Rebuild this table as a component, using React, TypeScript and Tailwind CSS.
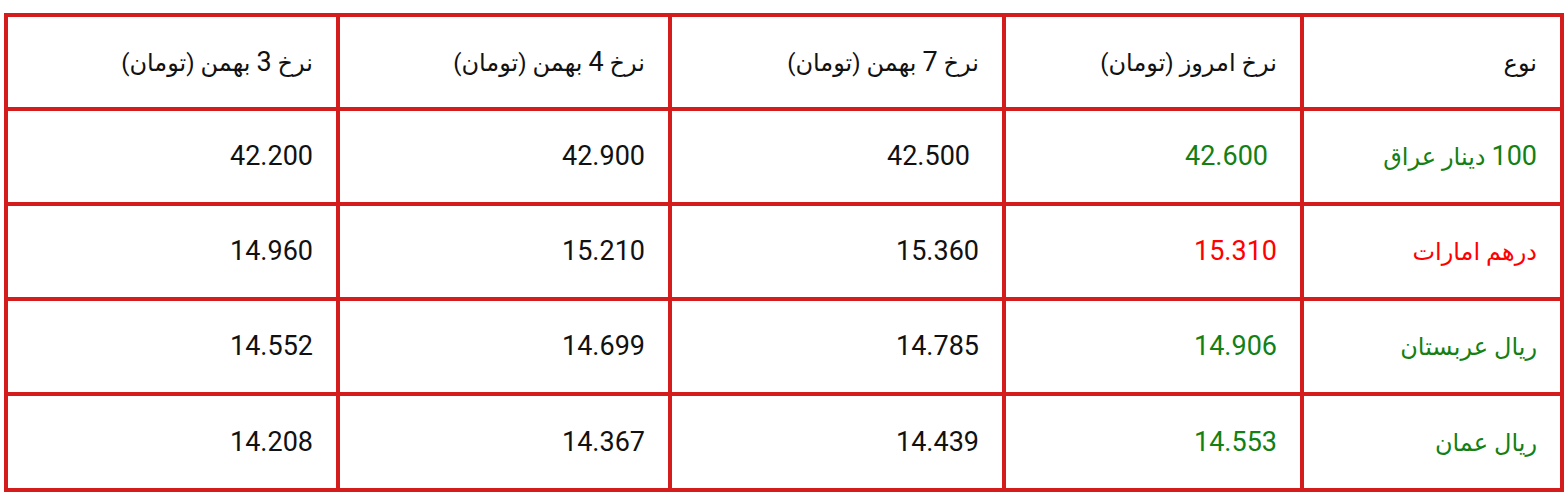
import React from "react";

const header = ["نوع", "نرخ امروز (تومان)", "نرخ 7 بهمن (تومان)", "نرخ 4 بهمن (تومان)", "نرخ 3 بهمن (تومان)"];

const rows: { name: string; today: string; c7: string; c4: string; c3: string; tone: "green" | "red"; h: string }[] = [
  { name: "100 دینار عراق", today: "42.600", c7: "42.500", c4: "42.900", c3: "42.200", tone: "green", h: "h-[91px]" },
  { name: "درهم امارات", today: "15.310", c7: "15.360", c4: "15.210", c3: "14.960", tone: "red", h: "h-[91px]" },
  { name: "ریال عربستان", today: "14.906", c7: "14.785", c4: "14.699", c3: "14.552", tone: "green", h: "h-[91px]" },
  { name: "ریال عمان", today: "14.553", c7: "14.439", c4: "14.367", c3: "14.208", tone: "green", h: "h-[92px]" },
];

const cell = "bg-white flex items-center justify-start pr-[23px]";

function Mixed({ text }: { text: string }) {
  const parts = text.split(/([0-9.]+)/).filter((p) => p.length > 0);
  return (
    <span>
      {parts.map((p, i) =>
        /^[0-9.]+$/.test(p) ? (
          <span key={i} className="text-[27px]">
            {p}
          </span>
        ) : (
          <span key={i} className="text-[24px]">
            {p}
          </span>
        )
      )}
    </span>
  );
}

export default function App() {
  return (
    <div
      className="w-[1566px] h-[496px] bg-white overflow-hidden pt-[13px] pl-[4px]"
      style={{ fontFamily: "Roboto, 'DejaVu Sans', 'Noto Sans', sans-serif" }}
    >
      <div
        dir="rtl"
        className="w-[1560px] grid grid-cols-[256px_294px_330px_328px_328px] gap-[4px] p-[4px] bg-[#d41c1c] text-[27px] leading-none text-[#111]"
      >
        {header.map((h, i) => (
          <div key={i} className={`${cell} h-[90px]`}>
            <Mixed text={h} />
          </div>
        ))}
        {rows.map((r, i) => {
          const toneCls = r.tone === "green" ? "text-[#138013]" : "text-[#ff0000]";
          return (
            <React.Fragment key={i}>
              <div className={`${cell} ${r.h} ${toneCls}`}>
                <Mixed text={r.name} />
              </div>
              <div className={`${cell} ${r.h} ${toneCls} ${i === 0 ? "pr-[32px]" : ""}`}>{r.today}</div>
              <div className={`${cell} ${r.h} ${i === 0 ? "pr-[32px]" : ""}`}>{r.c7}</div>
              <div className={`${cell} ${r.h}`}>{r.c4}</div>
              <div className={`${cell} ${r.h}`}>{r.c3}</div>
            </React.Fragment>
          );
        })}
      </div>
    </div>
  );
}
